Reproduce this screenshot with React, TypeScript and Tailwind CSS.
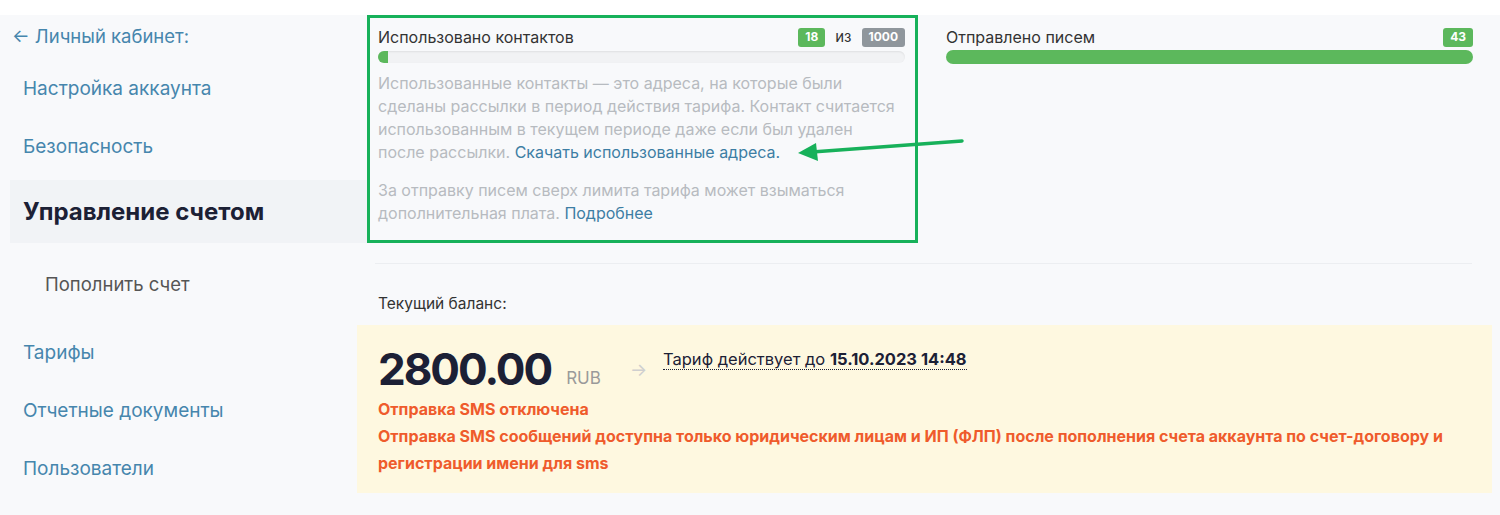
import React from 'react';

const sideLink = "block px-[23px] text-[19px] text-[#4686ad] leading-[58px]";

const Badge = ({ children, tone }: { children: React.ReactNode; tone: 'green' | 'gray' }) => (
  <span
    className={
      tone === 'green'
        ? 'inline-flex h-[19px] items-center rounded-[3px] bg-[#5cb85c] px-[7px] text-[12px] font-bold text-white'
        : 'inline-flex h-[19px] items-center rounded-[3px] bg-[#8f969c] px-[7px] text-[12px] font-bold text-white'
    }
  >
    {children}
  </span>
);

const App: React.FC = () => {
  return (
    <div className="h-[515px] w-[1500px] overflow-hidden bg-[#f8f9fb] font-['Inter','Noto_Sans',sans-serif] text-[#333]">
      <div className="h-[15px] bg-white" />
      <div className="flex">
        {/* SIDEBAR */}
        <aside className="w-[367px] shrink-0 pt-[6px]">
          <div className="px-[12px] text-[18.5px] leading-[30px] text-[#4686ad]">← Личный кабинет:</div>
          <div className="mt-[9px]">
            <a className={sideLink}>Настройка аккаунта</a>
            <a className={sideLink}>Безопасность</a>
            <div className="ml-[10px] mt-[4px] h-[63px] bg-[#f1f3f6] px-[13px] text-[24px] font-bold leading-[63px] text-[#1c2035]">
              Управление счетом
            </div>
            <div className="px-[45px] pt-[8px] text-[18.5px] leading-[66px] text-[#555]">Пополнить счет</div>
            <div className="pt-[7px]">
              <a className={sideLink}>Тарифы</a>
              <a className={sideLink}>Отчетные документы</a>
              <a className={sideLink}>Пользователи</a>
              <a className={sideLink + ' text-[#d6dbe0]'}>Настройки SMS</a>
            </div>
          </div>
        </aside>

        {/* MAIN */}
        <main className="relative flex-1">
          <div className="flex gap-[28px]">
            <div className="h-[228px] w-[551px] border-[3px] border-[#17b15a] px-[8px] pt-[8px]">
              <div className="flex h-[22px] items-center justify-between pr-[2px]">
                <span className="text-[16px]">Использовано контактов</span>
                <span className="flex items-center gap-[10px] text-[15px]">
                  <Badge tone="green">18</Badge>
                  <span>из</span>
                  <Badge tone="gray">1000</Badge>
                </span>
              </div>
              <div className="mr-[2px] mt-[3px] h-[12px] rounded-[6px] bg-[#f1f2f4] shadow-[inset_0_1px_2px_rgba(0,0,0,0.08)]">
                <div className="h-full w-[10px] rounded-l-[6px] bg-[#5cb85c]" />
              </div>
              <p className="mt-[9px] pr-[6px] text-[16px] leading-[23px] text-[#b7bbc0]">
                Использованные контакты — это адреса, на которые были сделаны рассылки в период действия тарифа. Контакт считается использованным в текущем периоде даже если был удален после рассылки.{' '}
                <a className="text-[#3d7ea4]">Скачать использованные адреса.</a>
              </p>
              <p className="mt-[15px] pr-[6px] text-[16px] leading-[23px] text-[#b7bbc0]">
                За отправку писем сверх лимита тарифа может взыматься дополнительная плата.{' '}
                <a className="text-[#3d7ea4]">Подробнее</a>
              </p>
            </div>

            <div className="w-[527px] pt-[11px]">
              <div className="flex h-[22px] items-center justify-between">
                <span className="text-[16px]">Отправлено писем</span>
                <Badge tone="green">43</Badge>
              </div>
              <div className="mt-[2px] h-[14px] rounded-[7px] bg-[#5cb85c]" />
            </div>
          </div>

          <div className="ml-[8px] mr-[28px] mt-[20px] h-px bg-[#eceef1]" />

          <div className="ml-[11px] mt-[30px] text-[15.5px] leading-[20px]">Текущий баланс:</div>

          <div className="-ml-[10px] mr-[8px] mt-[11px] h-[168px] bg-[#fef8e0] px-[21px] pt-[19px]">
            <div className="flex items-start">
              <span className="text-[44px] font-bold leading-[50px] tracking-[-2px] text-[#1c2035]">2800.00</span>
              <span className="ml-[15px] mt-[24px] text-[17px] leading-[20px] text-[#9a9a9a]">RUB</span>
              <span className="ml-[29px] mt-[16px] text-[18px] leading-[20px] text-[#cfcfcf]">→</span>
              <span className="ml-[16px] mt-[6px] border-b border-dotted border-[#1c2035] text-[16.5px] leading-[19px] text-[#1c2035]">
                Тариф действует до <b>15.10.2023 14:48</b>
              </span>
            </div>
            <div className="mt-[2px] text-[16px] font-bold leading-[27px] text-[#ef5b2c]">
              <div>Отправка SMS отключена</div>
              <div>
                Отправка SMS сообщений доступна только юридическим лицам и ИП (ФЛП) после пополнения счета аккаунта по счет-договору и регистрации имени для sms
              </div>
            </div>
          </div>

          {/* annotation arrow */}
          <svg className="pointer-events-none absolute left-[425px] top-[118px]" width="175" height="30" viewBox="0 0 175 30">
            <path d="M170 8 L20 19" stroke="#17b15a" strokeWidth="3.5" strokeLinecap="round" />
            <path d="M6 20 L24 10 L26 28 Z" fill="#17b15a" />
          </svg>
        </main>
      </div>
    </div>
  );
};

export default App;
